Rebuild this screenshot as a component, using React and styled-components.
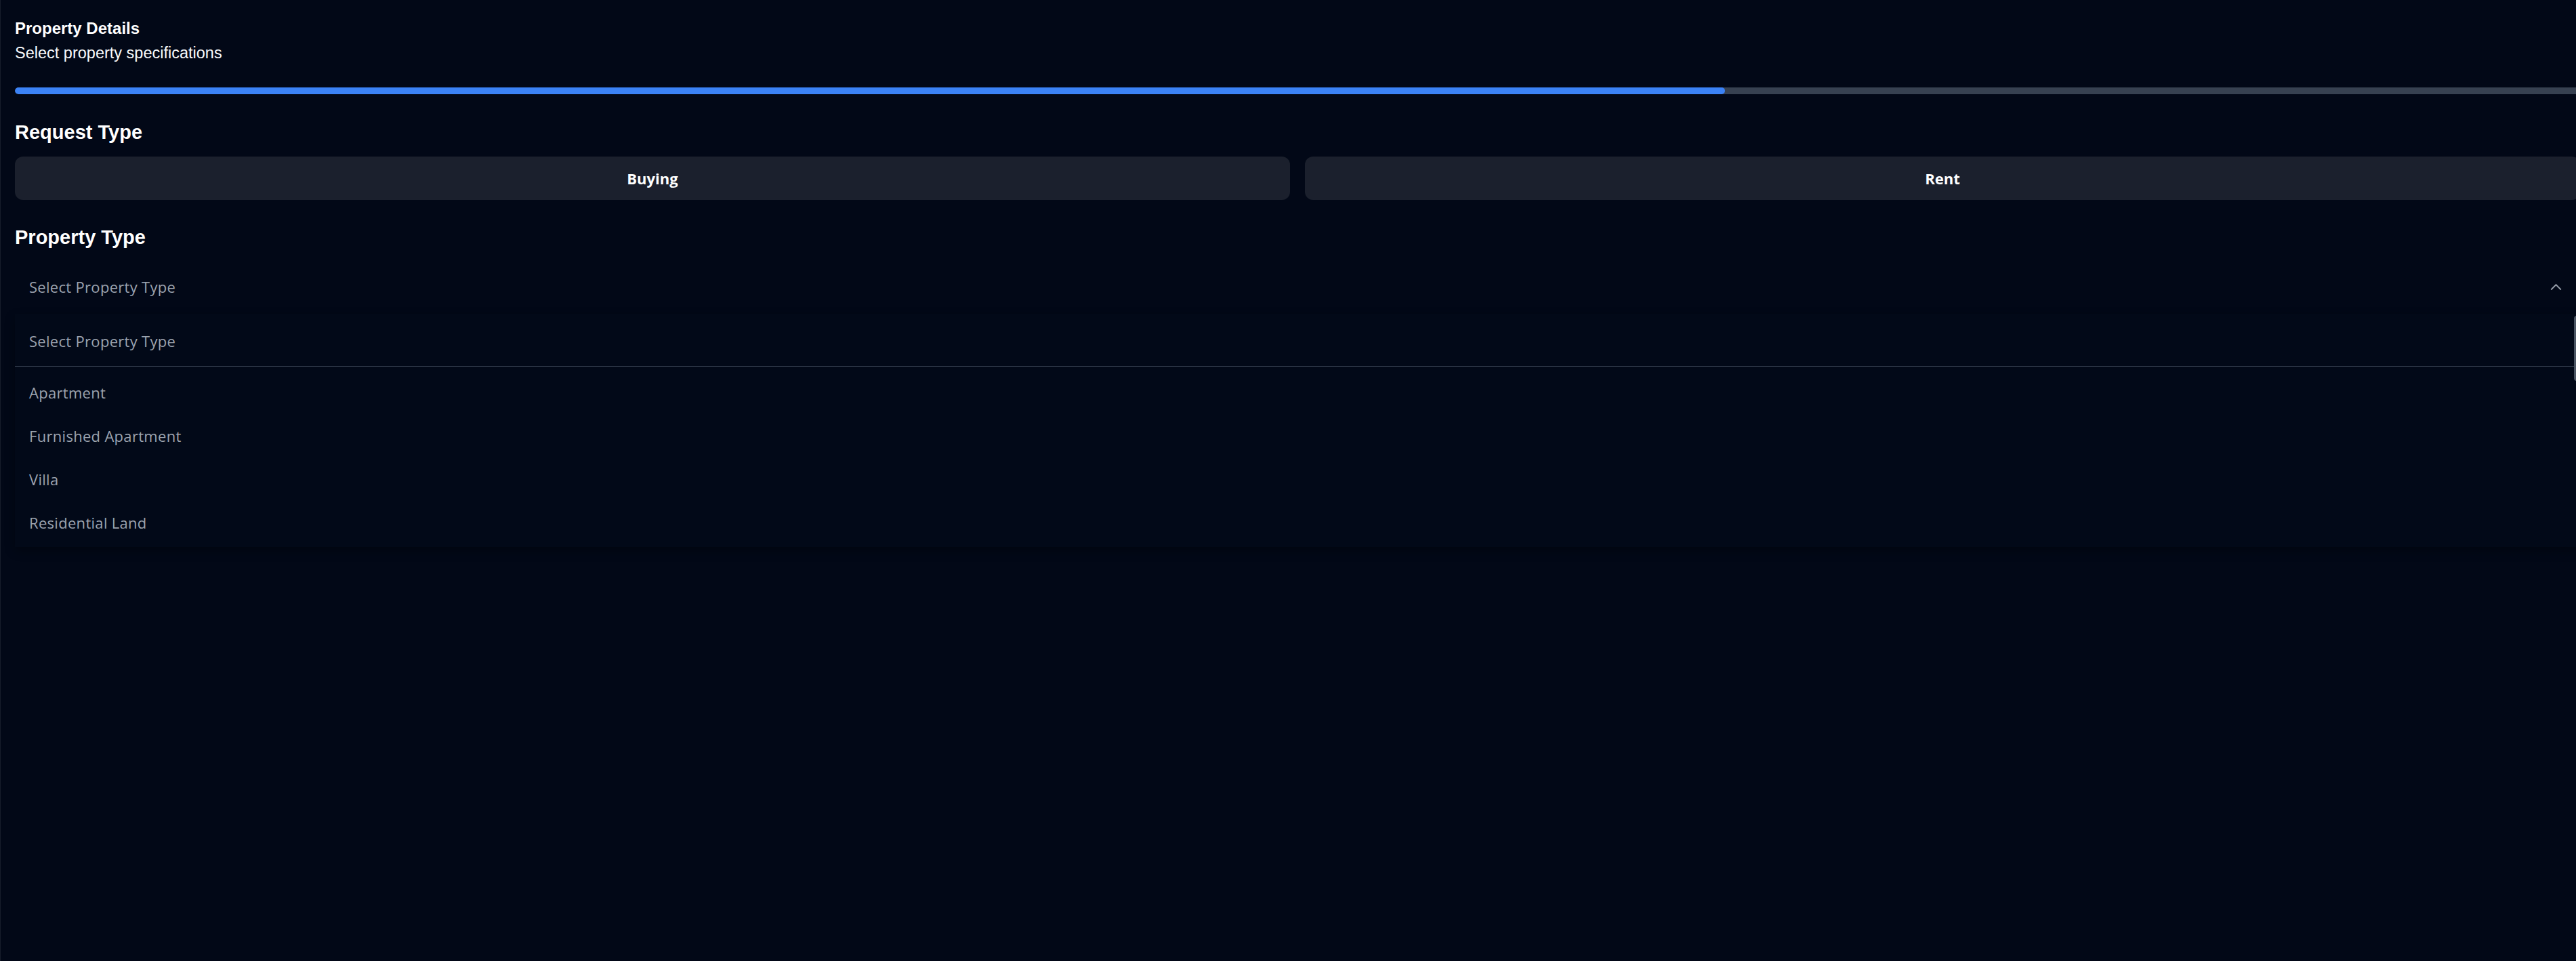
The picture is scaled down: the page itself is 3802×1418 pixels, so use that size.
import React from 'react'
import styled, { createGlobalStyle } from 'styled-components'
import { ChevronUp } from 'lucide-react'

const GlobalStyle = createGlobalStyle`
  html, body {
    margin: 0;
    padding: 0;
    background: #020817;
    overflow: hidden;
  }
  * { box-sizing: border-box; }
`

const Page = styled.div`
  min-height: 100vh;
  background: #020817;
  border-left: 1px solid #171d2b;
  padding: 26px 0 0 21px;
`

const Content = styled.div`
  width: 3786px;
  display: flex;
  flex-direction: column;
`

const Title = styled.h1`
  margin: 0;
  font-family: "Liberation Sans", Arial, sans-serif;
  font-weight: 700;
  font-size: 24px;
  line-height: 32px;
  color: #ffffff;
`

const Subtitle = styled.p`
  margin: 4px 0 0;
  font-family: "Liberation Sans", Arial, sans-serif;
  font-size: 23.5px;
  line-height: 32px;
  color: #f8fafc;
`

const Track = styled.div`
  margin-top: 35px;
  height: 10px;
  background: #374151;
  border-radius: 5px 0 0 5px;
  overflow: hidden;
`

const Fill = styled.div`
  height: 100%;
  background: #3b82f6;
  border-radius: 5px;
`

const SectionTitle = styled.h2`
  margin: ${p => p.$top}px 0 0;
  font-family: "Liberation Sans", Arial, sans-serif;
  font-weight: 700;
  font-size: 29px;
  line-height: 36px;
  color: #ffffff;
`

const ButtonRow = styled.div`
  margin-top: 18px;
  display: grid;
  grid-template-columns: 1fr 1fr;
  gap: 22px;
`

const Choice = styled.button`
  height: 64px;
  border: none;
  border-radius: 12px;
  background: #1b202d;
  color: #ffffff;
  font-family: "Open Sans", "Liberation Sans", sans-serif;
  font-weight: 700;
  font-size: 22px;
  cursor: pointer;
`

const Trigger = styled.div`
  margin-top: 23px;
  height: 64px;
  display: flex;
  align-items: center;
  justify-content: space-between;
  padding: 0 22px 0 21px;
  color: #9ca3af;
  font-family: "Open Sans", "Liberation Sans", sans-serif;
  font-size: 22px;
  letter-spacing: 0.3px;
`

const Panel = styled.div`
  margin-top: 8px;
  display: flex;
  background: #020918;
  box-shadow: 0 6px 14px rgba(0, 0, 0, 0.3);
`

const List = styled.div`
  flex: 1;
  display: flex;
  flex-direction: column;
  padding: 8px 0 4px;
`

const Option = styled.div`
  height: 64px;
  display: flex;
  align-items: center;
  padding-left: 21px;
  color: #9ca3af;
  font-family: "Open Sans", "Liberation Sans", sans-serif;
  font-size: 22px;
  letter-spacing: 0.3px;
`

const Divider = styled.div`
  height: 1px;
  margin: 5px 0 6px;
  background: #374151;
`

const ScrollTrack = styled.div`
  width: 9px;
  padding-top: 3px;
`

const Thumb = styled.div`
  height: 96px;
  border-radius: 4px;
  background: #4b5563;
`

const options = ['Apartment', 'Furnished Apartment', 'Villa', 'Residential Land']

const App = () => {
  const progress = 66.67

  return (
    <Page>
      <GlobalStyle />
      <Content>
        <Title>Property Details</Title>
        <Subtitle>Select property specifications</Subtitle>
        <Track>
          <Fill style={{ width: progress + '%' }} />
        </Track>

        <SectionTitle $top={38}>Request Type</SectionTitle>
        <ButtonRow>
          <Choice>Buying</Choice>
          <Choice>Rent</Choice>
        </ButtonRow>

        <SectionTitle $top={37}>Property Type</SectionTitle>
        <Trigger>
          <span>Select Property Type</span>
          <ChevronUp size={27} strokeWidth={1.8} color="#9ca3af" />
        </Trigger>
        <Panel>
          <List>
            <Option>Select Property Type</Option>
            <Divider />
            {options.map(item => <Option key={item}>{item}</Option>)}
          </List>
          <ScrollTrack>
            <Thumb />
          </ScrollTrack>
        </Panel>
      </Content>
    </Page>
  )
}

export default App
